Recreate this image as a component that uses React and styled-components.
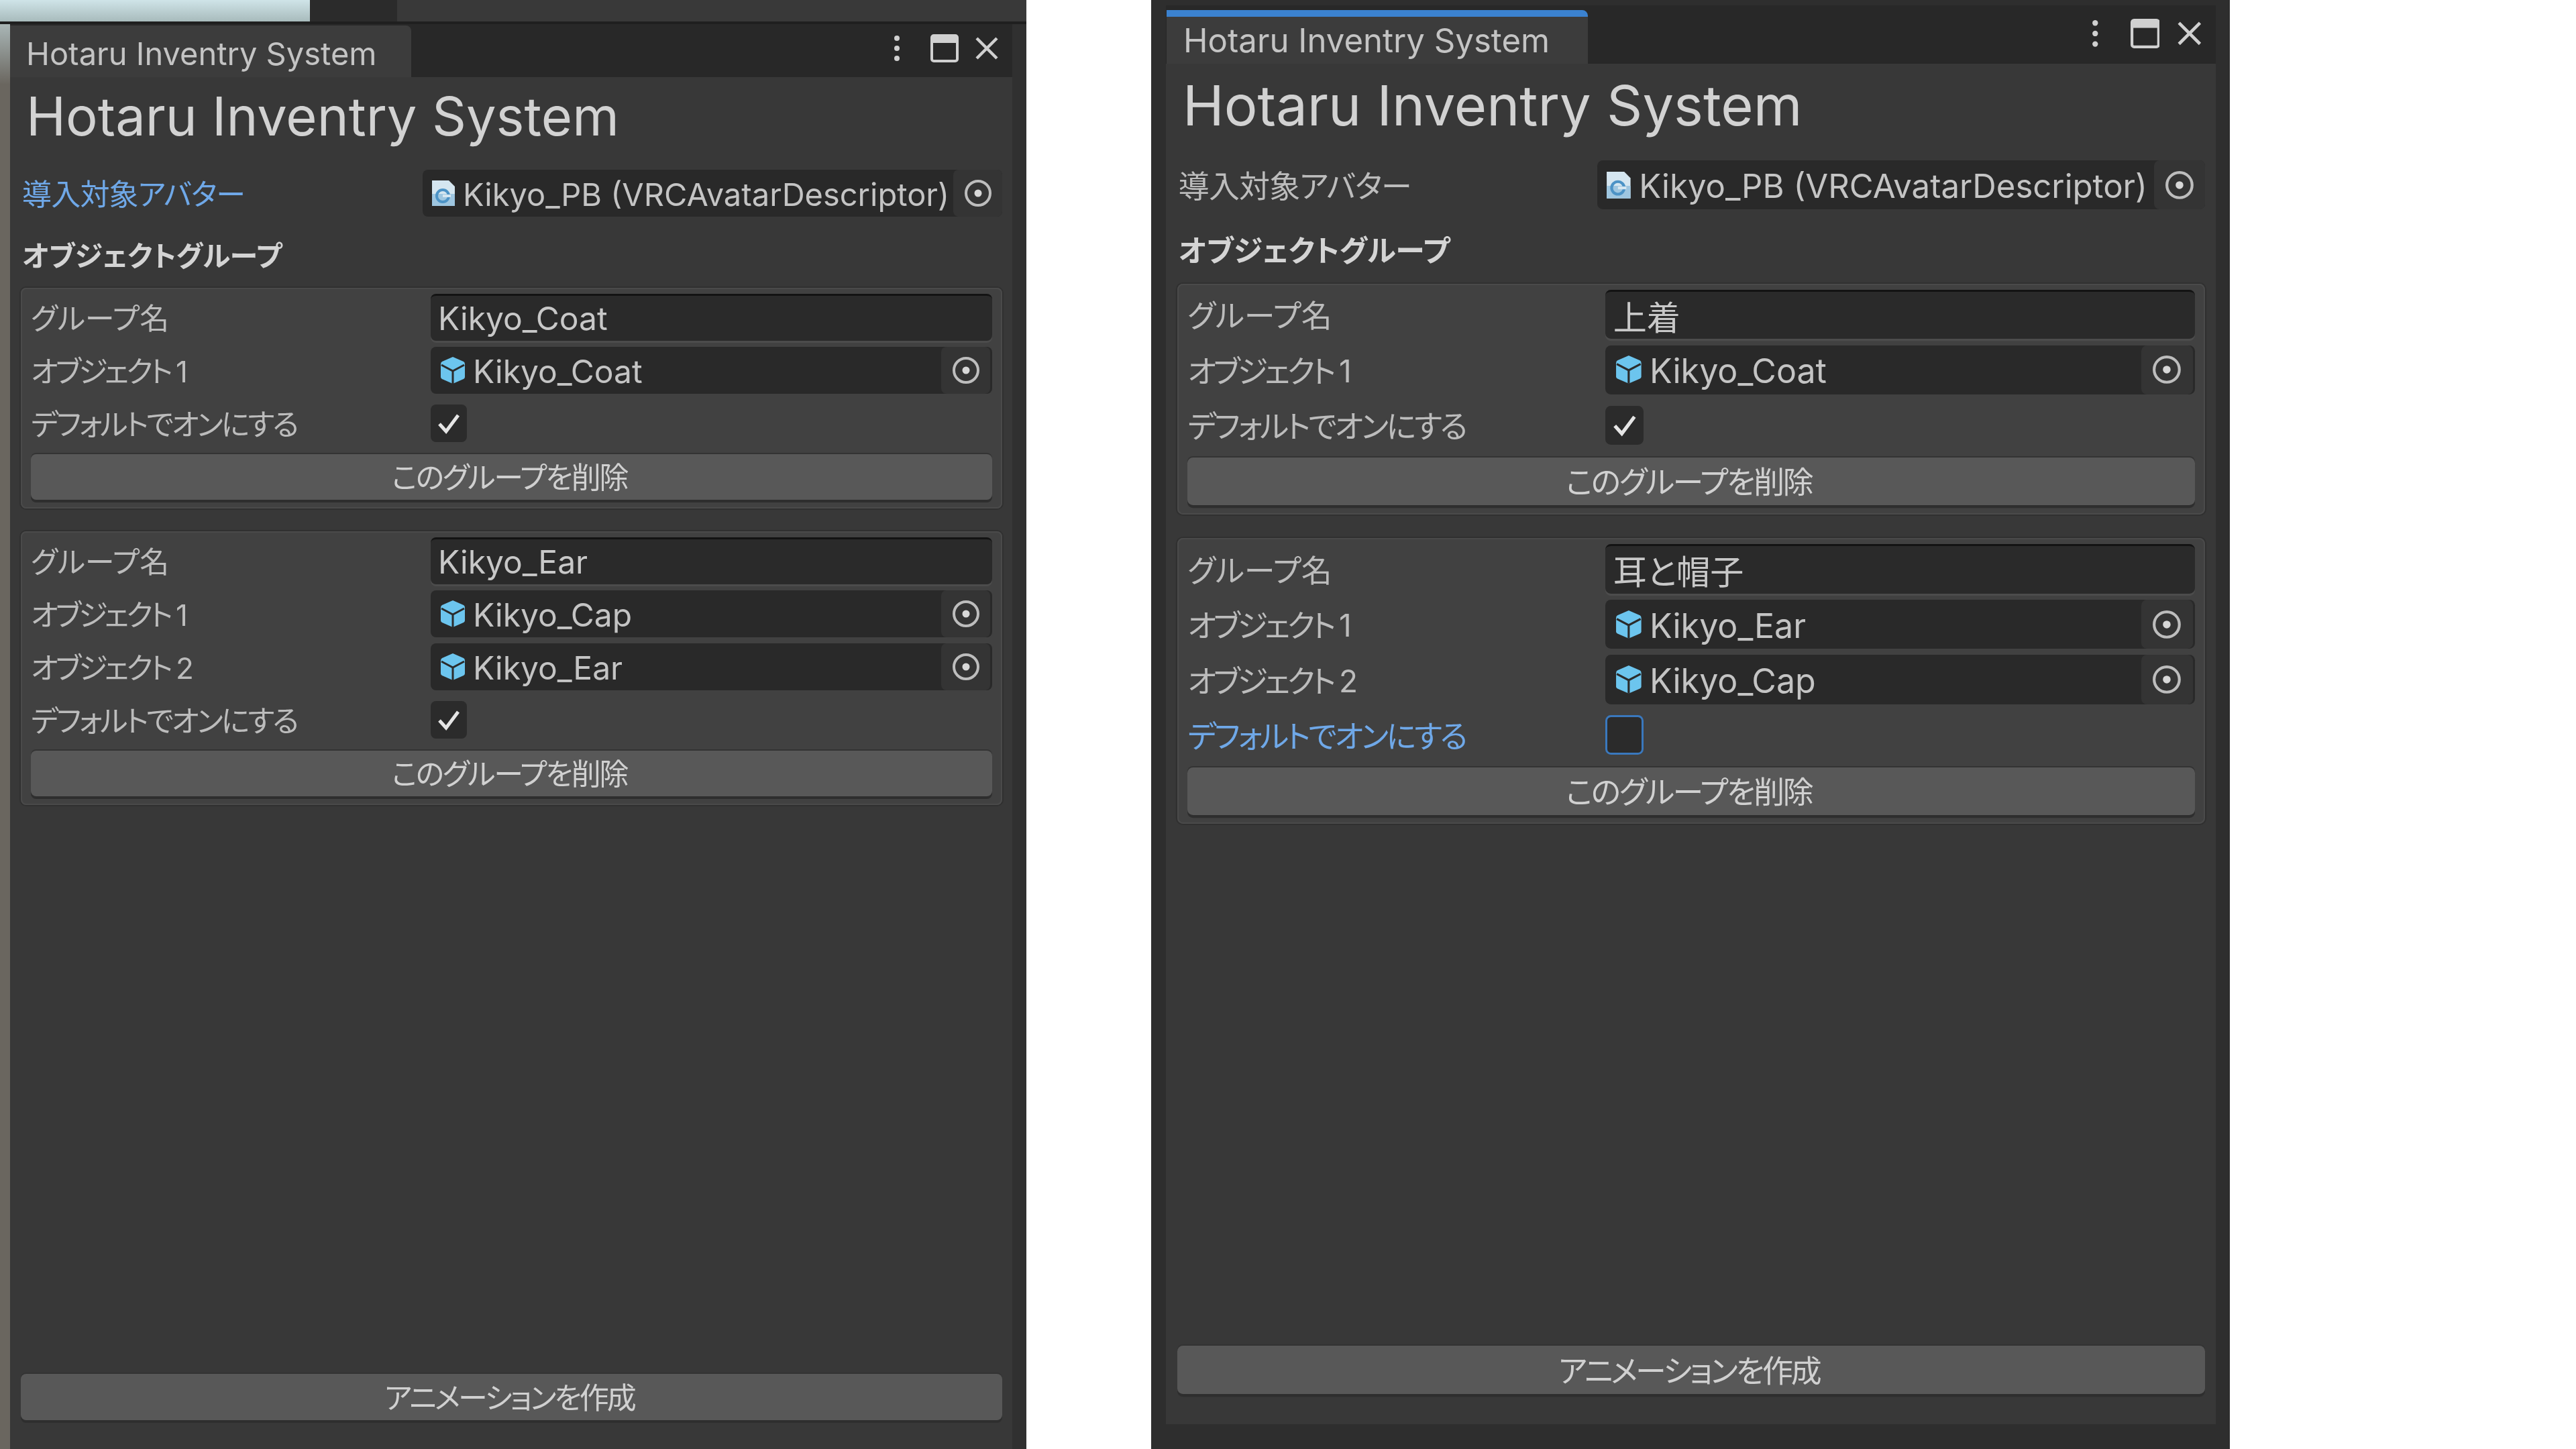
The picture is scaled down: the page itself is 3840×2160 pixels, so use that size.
import React from "react";
import styled, { createGlobalStyle } from "styled-components";

const GROUPS_LEFT = [
  { name: "Kikyo_Coat", objects: ["Kikyo_Coat"], checked: true },
  { name: "Kikyo_Ear", objects: ["Kikyo_Cap", "Kikyo_Ear"], checked: true },
];

const GROUPS_RIGHT = [
  { name: "上着", objects: ["Kikyo_Coat"], checked: true },
  { name: "耳と帽子", objects: ["Kikyo_Ear", "Kikyo_Cap"], checked: false, focused: true },
];

const CubeIcon = () => (
  <CubeSvg viewBox="0 0 38 42">
    <path
      d="M19 1 L35 8 Q37 9 37 12 V31 Q37 33 35 34 L19 41 L3 34 Q1 33 1 31 V12 Q1 9 3 8 Z"
      fill="#6cc5ee"
    />
    <path d="M2 13 L19 22 L36 13 M19 22 V41" fill="none" stroke="#2b2b2b" strokeWidth="3" />
  </CubeSvg>
);

const AvatarIcon = () => (
  <AvatarSvg viewBox="0 0 38 42">
    <path d="M2 2 H27 L36 11 V40 H2 Z" fill="#d5e6f0" />
    <path d="M2 22 H36 V40 H2 Z" fill="#9ec6e0" />
    <circle cx="18" cy="25" r="9" fill="none" stroke="#4c93c6" strokeWidth="4" />
    <path d="M18 25 H30" stroke="#d5e6f0" strokeWidth="4" />
  </AvatarSvg>
);

const PickerIcon = () => (
  <PickerSvg viewBox="0 0 42 42">
    <circle cx="21" cy="21" r="18" fill="none" stroke="#bdbdbd" strokeWidth="4" />
    <circle cx="21" cy="21" r="5.5" fill="#d8d8d8" />
  </PickerSvg>
);

const MenuIcon = () => (
  <MenuSvg viewBox="0 0 12 42">
    <circle cx="6" cy="6" r="4" fill="#d0d0d0" />
    <circle cx="6" cy="21" r="4" fill="#d0d0d0" />
    <circle cx="6" cy="36" r="4" fill="#d0d0d0" />
  </MenuSvg>
);

const MaximizeIcon = () => (
  <MaximizeSvg viewBox="0 0 42 42">
    <rect x="2" y="2" width="38" height="38" rx="3" fill="none" stroke="#d0d0d0" strokeWidth="4" />
    <rect x="2" y="2" width="38" height="11" fill="#d0d0d0" />
  </MaximizeSvg>
);

const CloseIcon = () => (
  <CloseSvg viewBox="0 0 36 36">
    <path d="M3 3 L33 33 M33 3 L3 33" stroke="#d0d0d0" strokeWidth="4.5" />
  </CloseSvg>
);

const CheckIcon = () => (
  <CheckSvg viewBox="0 0 36 36">
    <path d="M4 19 L14 30 L32 6" fill="none" stroke="#e6e6e6" strokeWidth="5" />
  </CheckSvg>
);

const ObjectField = ({ value, avatar }) => (
  <FieldBox>
    {avatar ? <AvatarIcon /> : <CubeIcon />}
    <FieldText $avatar={avatar}>{value}</FieldText>
    <PickerButton $avatar={avatar}>
      <PickerIcon />
    </PickerButton>
  </FieldBox>
);

const Group = ({ group }) => (
  <GroupBox>
    <Row>
      <Label>グループ名</Label>
      <TextInput>{group.name}</TextInput>
    </Row>
    {group.objects.map((object, i) => (
      <Row key={object}>
        <Label $spacing={-4}>オブジェクト {i + 1}</Label>
        <ObjectField value={object} />
      </Row>
    ))}
    <Row>
      <Label $active={group.focused} $spacing={-3}>
        デフォルトでオンにする
      </Label>
      <Checkbox $focused={group.focused}>{group.checked && <CheckIcon />}</Checkbox>
    </Row>
    <ActionButton>このグループを削除</ActionButton>
  </GroupBox>
);

const Panel = ({ groups, avatarActive, variant }) => (
  <Inner $variant={variant}>
    <Header $variant={variant}>
      <Tab $variant={variant}>Hotaru Inventry System</Tab>
      <WindowIcons>
        <MenuIcon />
        <MaximizeIcon />
        <CloseIcon />
      </WindowIcons>
    </Header>
    <Content>
      <Title $variant={variant}>Hotaru Inventry System</Title>
      <AvatarRow>
        <Label $active={avatarActive} $spacing={-0.8}>
          導入対象アバター
        </Label>
        <ObjectField value="Kikyo_PB (VRCAvatarDescriptor)" avatar />
      </AvatarRow>
      <SectionTitle>オブジェクトグループ</SectionTitle>
      <Groups>
        {groups.map((group) => (
          <Group key={group.name} group={group} />
        ))}
      </Groups>
      <FooterButton>アニメーションを作成</FooterButton>
    </Content>
  </Inner>
);

export default function App() {
  return (
    <Page>
      <GlobalStyle />
      <LeftWindow>
        <DesktopStrip>
          <SkyPart />
          <DarkPart />
          <GreyPart />
        </DesktopStrip>
        <LeftFrame>
          <DesktopEdge />
          <Panel groups={GROUPS_LEFT} avatarActive variant="left" />
          <WindowEdge />
        </LeftFrame>
      </LeftWindow>
      <RightWindow>
        <Panel groups={GROUPS_RIGHT} variant="right" />
      </RightWindow>
    </Page>
  );
}

const GlobalStyle = createGlobalStyle`
  html, body {
    margin: 0;
    background: #fff;
  }
`;

const Page = styled.div`
  display: flex;
  gap: 186px;
  width: 3840px;
  height: 2160px;
  overflow: hidden;
  background: #fff;
  font-family: Inter, "Noto Sans CJK JP", sans-serif;
  font-feature-settings: "palt";
  color: #c6c6c6;
  filter: blur(0.7px);
`;

const LeftWindow = styled.div`
  display: flex;
  flex-direction: column;
  width: 1530px;
  height: 2160px;
`;

const DesktopStrip = styled.div`
  display: flex;
  height: 36px;
  flex: none;
  background: #1f1f1f;
`;

const SkyPart = styled.div`
  width: 462px;
  height: 32px;
  background: linear-gradient(#cfe4e8, #a8bbbc);
`;

const DarkPart = styled.div`
  width: 130px;
  height: 32px;
  background: #2b2b2b;
`;

const GreyPart = styled.div`
  flex: 1;
  height: 32px;
  background: #393939;
`;

const LeftFrame = styled.div`
  display: flex;
  flex: 1;
  min-height: 0;
`;

const DesktopEdge = styled.div`
  width: 15px;
  flex: none;
  background: linear-gradient(#a9b6b6, #6a665f 90px);
`;

const WindowEdge = styled.div`
  width: 21px;
  flex: none;
  background: #303030;
`;

const RightWindow = styled.div`
  display: flex;
  width: 1608px;
  height: 2160px;
  box-sizing: border-box;
  padding: 8px 21px 37px 22px;
  background: #2e2e2e;
`;

const Inner = styled.div`
  display: flex;
  flex-direction: column;
  flex: 1;
  min-width: 0;
  background: #383838;
  zoom: ${(p) => (p.$variant === "right" ? 1.045 : 1)};
`;

const Header = styled.div`
  display: flex;
  align-items: flex-end;
  flex: none;
  height: ${(p) => (p.$variant === "right" ? 83 : 79)}px;
  background: #282828;
`;

const Tab = styled.div`
  display: flex;
  align-items: center;
  box-sizing: border-box;
  width: ${(p) => (p.$variant === "right" ? 601 : 598)}px;
  height: ${(p) => (p.$variant === "right" ? 76 : 77)}px;
  padding-left: 24px;
  padding-top: ${(p) => (p.$variant === "right" ? 0 : 5)}px;
  margin-left: ${(p) => (p.$variant === "right" ? 1 : 0)}px;
  background: #3c3c3c;
  border-top: ${(p) => (p.$variant === "right" ? "10px solid #3b82d0" : "0")};
  border-top-right-radius: 8px;
  font-size: 47px;
  color: #c4c4c4;
  white-space: nowrap;
`;

const WindowIcons = styled.div`
  display: flex;
  align-items: center;
  margin-left: auto;
  padding: 0 20px 22px 0;
`;

const MenuSvg = styled.svg`
  display: block;
  width: 12px;
  height: 42px;
  margin-right: 44px;
`;

const MaximizeSvg = styled.svg`
  display: block;
  width: 42px;
  height: 42px;
  margin-right: 24px;
`;

const CloseSvg = styled.svg`
  display: block;
  width: 36px;
  height: 36px;
`;

const Content = styled.div`
  display: flex;
  flex-direction: column;
  flex: 1;
  min-height: 0;
  padding: 0 15px 43px 16px;
`;

const Title = styled.div`
  height: 92px;
  margin: 14px 0 0 8px;
  font-size: 79.5px;
  line-height: ${(p) => (p.$variant === "right" ? 92 : 88)}px;
  color: #d2d2d2;
  white-space: nowrap;
`;

const Label = styled.div`
  padding-top: 5px;
  font-size: 44px;
  line-height: 65px;
  letter-spacing: ${(p) => p.$spacing || 0}px;
  color: ${(p) => (p.$active ? "#6fa8e8" : "#bcbcbc")};
  white-space: nowrap;
`;

const AvatarRow = styled.div`
  display: grid;
  grid-template-columns: 597px 1fr;
  align-items: center;
  height: 70px;
  margin-top: 32px;
  padding-left: 2px;
`;

const SectionTitle = styled.div`
  height: 50px;
  margin-top: 32px;
  padding: 2px 0 0 2px;
  font-size: 42px;
  font-weight: 700;
  line-height: 50px;
  color: #d4d4d4;
  box-sizing: border-box;
`;

const Groups = styled.div`
  display: flex;
  flex-direction: column;
  gap: 34px;
  margin-top: 24px;
`;

const GroupBox = styled.div`
  display: flex;
  flex-direction: column;
  gap: 9px;
  padding: 9px 15px 13px;
  background: #414141;
  border-radius: 8px;
  box-shadow: 0 0 0 2px #303030, inset 0 0 0 2px #4a4a4a;
`;

const Row = styled.div`
  display: grid;
  grid-template-columns: 596px 1fr;
  align-items: center;
  height: 70px;
`;

const TextInput = styled.div`
  display: flex;
  align-items: center;
  height: 70px;
  box-sizing: border-box;
  padding-left: 11px;
  background: #2a2a2a;
  border-top: 3px solid #131313;
  border-radius: 8px;
  font-size: 48px;
  color: #c8c8c8;
  box-shadow: 0 3px 0 #4c4c4c;
`;

const FieldBox = styled.div`
  display: flex;
  align-items: center;
  height: 70px;
  box-sizing: border-box;
  padding-left: 12px;
  background: #292929;
  border-radius: 8px;
`;

const CubeSvg = styled.svg`
  width: 38px;
  height: 42px;
  flex: none;
  margin-left: 2px;
`;

const AvatarSvg = styled.svg`
  width: 38px;
  height: 42px;
  flex: none;
`;

const FieldText = styled.div`
  flex: 1;
  min-width: 0;
  margin-left: ${(p) => (p.$avatar ? 10 : 11)}px;
  padding-top: 3px;
  font-size: ${(p) => (p.$avatar ? 47 : 48)}px;
  color: #c4c4c4;
  white-space: nowrap;
`;

const PickerButton = styled.div`
  display: flex;
  align-items: center;
  justify-content: center;
  flex: none;
  align-self: stretch;
  width: 73px;
  margin-right: ${(p) => (p.$avatar ? 0 : 3)}px;
  background: #343434;
  border-radius: 8px;
`;

const PickerSvg = styled.svg`
  width: 42px;
  height: 42px;
`;

const Checkbox = styled.div`
  display: flex;
  align-items: center;
  justify-content: center;
  width: 54px;
  height: 56px;
  box-sizing: border-box;
  background: #2b2b2b;
  border-radius: 8px;
  border: ${(p) => (p.$focused ? "3px solid #3a78bd" : "0")};
`;

const CheckSvg = styled.svg`
  width: 36px;
  height: 36px;
`;

const ActionButton = styled.button`
  display: block;
  width: 100%;
  height: 68px;
  margin-top: 2px;
  padding: 0 6px 4px 0;
  border: 0;
  border-radius: 8px;
  background: #585858;
  box-shadow: 0 4px 0 #2e2e2e, 0 -2px 0 #333;
  font: inherit;
  font-size: 44px;
  letter-spacing: -2.2px;
  color: #d0d0d0;
`;

const FooterButton = styled(ActionButton)`
  height: 69px;
  margin-top: auto;
  letter-spacing: -3px;
`;
